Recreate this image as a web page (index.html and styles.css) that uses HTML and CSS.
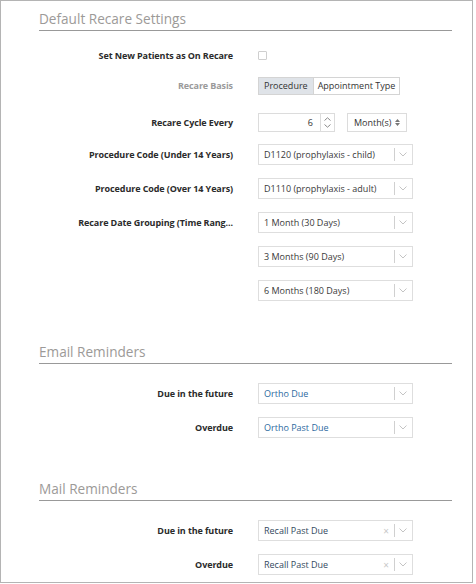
FILE: index.html
```html
<!DOCTYPE html>
<html lang="en">
<head>
  <meta charset="UTF-8">
  <title>Recare Settings</title>
  <link rel="stylesheet" href="styles.css">
</head>
<body>
  <div class="frame">
    <h2 class="section-title first">Default Recare Settings</h2>

    <div class="row row-check">
      <label class="row-label">Set New Patients as On Recare</label>
      <span class="checkbox"></span>
    </div>

    <div class="row row-basis">
      <label class="row-label muted">Recare Basis</label>
      <div class="btn-group">
        <span class="btn active">Procedure</span>
        <span class="btn">Appointment Type</span>
      </div>
    </div>

    <div class="row row-cycle">
      <label class="row-label">Recare Cycle Every</label>
      <div class="number">
        <span class="number-value">6</span>
        <span class="spinner">
          <svg width="7" height="4" viewBox="0 0 7 4"><path d="M0.5 3.5 L3.5 0.8 L6.5 3.5" fill="none" stroke="#8a8a8a" stroke-width="1"/></svg>
          <svg width="7" height="4" viewBox="0 0 7 4"><path d="M0.5 0.5 L3.5 3.2 L6.5 0.5" fill="none" stroke="#8a8a8a" stroke-width="1"/></svg>
        </span>
      </div>
      <div class="unit">Month(s)
        <svg width="5" height="7" viewBox="0 0 5 7"><path d="M0 3 L2.5 0 L5 3 Z M0 4 L2.5 7 L5 4 Z" fill="#777"/></svg>
      </div>
    </div>

    <div class="row row-proc">
      <label class="row-label">Procedure Code (Under 14 Years)</label>
      <div class="select"><span class="select-value">D1120 (prophylaxis - child)</span><span class="sep"></span><svg class="chev" width="8" height="5" viewBox="0 0 8 5"><path d="M0.5 0.5 L4 4 L7.5 0.5" fill="none" stroke="#c4c4c4"/></svg></div>
    </div>

    <div class="row">
      <label class="row-label">Procedure Code (Over 14 Years)</label>
      <div class="select"><span class="select-value">D1110 (prophylaxis - adult)</span><span class="sep"></span><svg class="chev" width="8" height="5" viewBox="0 0 8 5"><path d="M0.5 0.5 L4 4 L7.5 0.5" fill="none" stroke="#c4c4c4"/></svg></div>
    </div>

    <div class="row">
      <label class="row-label">Recare Date Grouping (Time Rang...</label>
      <div class="select"><span class="select-value">1 Month (30 Days)</span><span class="sep"></span><svg class="chev" width="8" height="5" viewBox="0 0 8 5"><path d="M0.5 0.5 L4 4 L7.5 0.5" fill="none" stroke="#c4c4c4"/></svg></div>
    </div>

    <div class="row">
      <span class="row-label"></span>
      <div class="select"><span class="select-value">3 Months (90 Days)</span><span class="sep"></span><svg class="chev" width="8" height="5" viewBox="0 0 8 5"><path d="M0.5 0.5 L4 4 L7.5 0.5" fill="none" stroke="#c4c4c4"/></svg></div>
    </div>

    <div class="row">
      <span class="row-label"></span>
      <div class="select"><span class="select-value">6 Months (180 Days)</span><span class="sep"></span><svg class="chev" width="8" height="5" viewBox="0 0 8 5"><path d="M0.5 0.5 L4 4 L7.5 0.5" fill="none" stroke="#c4c4c4"/></svg></div>
    </div>

    <h2 class="section-title">Email Reminders</h2>

    <div class="row row-top">
      <label class="row-label">Due in the future</label>
      <div class="select"><span class="select-value link">Ortho Due</span><span class="sep"></span><svg class="chev" width="8" height="5" viewBox="0 0 8 5"><path d="M0.5 0.5 L4 4 L7.5 0.5" fill="none" stroke="#c4c4c4"/></svg></div>
    </div>

    <div class="row">
      <label class="row-label">Overdue</label>
      <div class="select"><span class="select-value link">Ortho Past Due</span><span class="sep"></span><svg class="chev" width="8" height="5" viewBox="0 0 8 5"><path d="M0.5 0.5 L4 4 L7.5 0.5" fill="none" stroke="#c4c4c4"/></svg></div>
    </div>

    <h2 class="section-title">Mail Reminders</h2>

    <div class="row row-top">
      <label class="row-label">Due in the future</label>
      <div class="select"><span class="select-value dark">Recall Past Due</span><span class="clear">&times;</span><span class="sep"></span><svg class="chev" width="8" height="5" viewBox="0 0 8 5"><path d="M0.5 0.5 L4 4 L7.5 0.5" fill="none" stroke="#c4c4c4"/></svg></div>
    </div>

    <div class="row">
      <label class="row-label">Overdue</label>
      <div class="select"><span class="select-value dark">Recall Past Due</span><span class="clear">&times;</span><span class="sep"></span><svg class="chev" width="8" height="5" viewBox="0 0 8 5"><path d="M0.5 0.5 L4 4 L7.5 0.5" fill="none" stroke="#c4c4c4"/></svg></div>
    </div>
  </div>
</body>
</html>
```

FILE: styles.css
```css
body {
  margin: 0;
  padding: 0;
  background-color: #fff;
  font-family: "Open Sans", Arial, sans-serif;
  color: #333;
}

.frame {
  box-sizing: border-box;
  width: 473px;
  height: 583px;
  border: 1px solid #b4b4b4;
  padding: 0 20px 0 38px;
  overflow: hidden;
}

.section-title {
  margin: 41px 0 0;
  padding-bottom: 2px;
  font-size: 13.6px;
  line-height: 19px;
  font-weight: normal;
  color: #9c9a98;
  border-bottom: 1px solid #999;
}

.section-title.first {
  margin-top: 8px;
}

.row {
  display: flex;
  align-items: center;
  height: 21px;
  margin-top: 13px;
}

.row-check { margin-top: 14px; }
.row-basis { margin-top: 9px; }
.row-cycle { margin-top: 16px; }
.row-proc { margin-top: 11px; }
.row-top { margin-top: 19px; }

.row-label {
  flex: none;
  width: 194px;
  margin-right: 25px;
  text-align: right;
  font-size: 9px;
  font-weight: 700;
  letter-spacing: -0.1px;
  color: #2b2b2b;
  white-space: nowrap;
}

.row-label.muted {
  color: #9a9a9a;
}

.checkbox {
  width: 7px;
  height: 7px;
  border: 1px solid #cfcfcf;
  border-radius: 1px;
}

.btn-group {
  display: flex;
  height: 18px;
  border: 1px solid #d4d4d4;
  box-sizing: border-box;
  font-size: 9px;
}

.btn {
  display: flex;
  align-items: center;
  padding: 0 4px;
  color: #333;
}

.btn.active {
  padding: 0 5px;
  background-color: #dfe3e8;
  border-right: 1px solid #d4d4d4;
}

.number {
  display: flex;
  height: 19px;
  box-sizing: border-box;
  border: 1px solid #dcdcdc;
  font-size: 9px;
}

.number-value {
  width: 54px;
  padding-right: 7px;
  text-align: right;
  line-height: 17px;
}

.spinner {
  display: flex;
  flex-direction: column;
  justify-content: center;
  align-items: center;
  gap: 3px;
  width: 13px;
  border-left: 1px solid #dcdcdc;
}

.spinner svg {
  display: block;
}

.unit {
  display: flex;
  align-items: center;
  gap: 4px;
  height: 19px;
  box-sizing: border-box;
  width: 60px;
  margin-left: 12px;
  padding-left: 6px;
  border: 1px solid #dcdcdc;
  font-size: 9px;
  color: #333;
}

.select {
  display: flex;
  align-items: center;
  width: 155px;
  height: 21px;
  box-sizing: border-box;
  border: 1px solid #dedede;
  font-size: 9px;
}

.select-value {
  flex: 1;
  padding-left: 5px;
  color: #3a3a3a;
  white-space: nowrap;
}

.select-value.link {
  color: #2d6aa0;
}

.select-value.dark {
  color: #34495e;
}

.clear {
  color: #c8c8c8;
  font-size: 10px;
  margin-right: 5px;
}

.sep {
  width: 1px;
  height: 13px;
  background-color: #d0d0d0;
}

.chev {
  display: block;
  margin: 0 5px 0 4px;
}
```
